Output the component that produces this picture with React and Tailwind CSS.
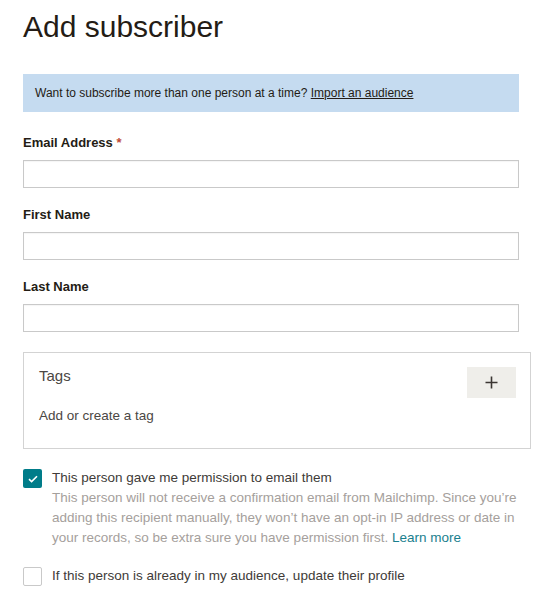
import React from "react";

function Field({ label, required }) {
  return (
    <div className="flex flex-col">
      <label className="text-[13px] leading-4 font-bold text-[#241c15] mb-[9px]">
        {label}
        {required && <span className="text-[#c04a36]"> *</span>}
      </label>
      <div className="h-[28px] w-[496px] border border-[#c9c9c9] bg-white shadow-[inset_0_1px_1px_rgba(0,0,0,0.04)]" />
    </div>
  );
}

export default function App() {
  return (
    <div
      className="bg-white w-[548px] h-[600px] overflow-hidden px-[23px] pt-[9px] text-[#241c15]"
      style={{ fontFamily: '"Liberation Sans", Arial, sans-serif' }}
    >
      <h1 className="text-[30px] leading-[36px] font-normal text-[#241c15]">Add subscriber</h1>

      <div className="mt-[29px] h-[38px] w-[496px] bg-[#c5dbf0] flex items-center pl-[12px] text-[12px] text-[#241c15]">
        Want to subscribe more than one person at a time?&nbsp;<span className="underline">Import an audience</span>
      </div>

      <div className="mt-[23px] flex flex-col gap-[19px]">
        <Field label="Email Address" required />
        <Field label="First Name" />
        <Field label="Last Name" />
      </div>

      <div className="mt-[20px] w-[508px] h-[97px] border border-[#d3d3d3] flex justify-between items-start pl-[15px] pr-[14px] pt-[14px]">
        <div className="flex flex-col">
          <div className="text-[15px] leading-[18px] text-[#4b4744]">Tags</div>
          <div className="mt-[23px] text-[13.5px] leading-4 text-[#4b4744]">Add or create a tag</div>
        </div>
        <div className="w-[49px] h-[31px] bg-[#efeeea] flex items-center justify-center">
          <svg width="13" height="13" viewBox="0 0 13 13">
            <path d="M6.5 0.5v12M0.5 6.5h12" stroke="#3b3633" strokeWidth="1.6" />
          </svg>
        </div>
      </div>

      <div className="mt-[20px] flex items-start gap-[10px]">
        <div className="w-[19px] h-[19px] rounded-[2px] bg-[#007c89] flex items-center justify-center shrink-0">
          <svg width="10" height="8" viewBox="0 0 10 8">
            <path d="M1 4.2l2.6 2.4L9 1.2" stroke="white" strokeWidth="1.6" fill="none" />
          </svg>
        </div>
        <div className="flex flex-col text-[13.5px] leading-[20px] -mt-[1px]">
          <div className="text-[#403b38]">This person gave me permission to email them</div>
          <div className="text-[#a5a09c] whitespace-nowrap">
            This person will not receive a confirmation email from Mailchimp. Since you’re
            <br />
            adding this recipient manually, they won’t have an opt-in IP address or date in
            <br />
            your records, so be extra sure you have permission first.{" "}
            <span className="text-[#1a7f8e]">Learn more</span>
          </div>
        </div>
      </div>

      <div className="mt-[18px] flex items-center gap-[10px]">
        <div className="w-[19px] h-[19px] rounded-[2px] border border-[#c9c9c9] bg-white shrink-0" />
        <div className="text-[13.5px] leading-[20px] text-[#403b38]">
          If this person is already in my audience, update their profile
        </div>
      </div>
    </div>
  );
}
